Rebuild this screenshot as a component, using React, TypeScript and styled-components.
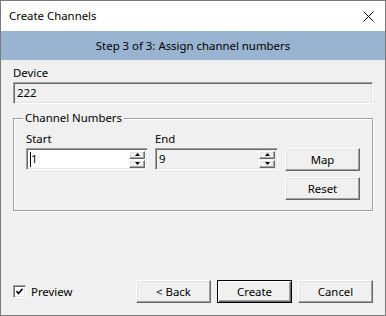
import React from "react";
import styled, { createGlobalStyle, css } from "styled-components";

const Global = createGlobalStyle`
  html, body { margin: 0; padding: 0; background: #ffffff; }
  body { font-family: "Noto Sans", "Open Sans", sans-serif; font-size: 11.4px; color: #000; }
  * { box-sizing: border-box; }
`;

const Window = styled.div`
  width: 386px;
  height: 316px;
  border: 1px solid #7a7a7a;
  background: #f0f0f0;
  display: flex;
  flex-direction: column;
`;

const TitleBar = styled.div`
  height: 30px;
  background: #ffffff;
  display: flex;
  align-items: center;
  justify-content: space-between;
  padding: 0 11px 0 8px;
`;

const TitleText = styled.span`
  line-height: 16px;
`;

const CloseIcon = () => (
  <svg width="11" height="11" viewBox="0 0 11 11">
    <path d="M0.5 0.5 L10.5 10.5 M10.5 0.5 L0.5 10.5" stroke="#000" strokeWidth="1" />
  </svg>
);

const StepBand = styled.div`
  height: 29px;
  background: #99b4d1;
  display: flex;
  align-items: center;
  justify-content: center;
  line-height: 16px;
`;

const Body = styled.div`
  flex: 1;
  display: flex;
  flex-direction: column;
  padding: 5px 12px 12px 12px;
`;

const Label = styled.div`
  line-height: 16px;
  height: 16px;
  margin-bottom: 1px;
`;

const sunken = css`
  border-top: 1px solid #a0a0a0;
  border-left: 1px solid #a0a0a0;
  border-right: 1px solid #ffffff;
  border-bottom: 1px solid #ffffff;
  box-shadow: inset 1px 1px 0 #696969, inset -1px -1px 0 #e3e3e3;
`;

const raised = css`
  border-top: 1px solid #ffffff;
  border-left: 1px solid #ffffff;
  border-right: 1px solid #696969;
  border-bottom: 1px solid #696969;
  box-shadow: inset -1px -1px 0 #a0a0a0, inset 1px 1px 0 #e3e3e3;
`;

const TextBox = styled.div<{ $white?: boolean; $w: number }>`
  ${sunken};
  width: ${(p) => p.$w}px;
  height: 22px;
  background: ${(p) => (p.$white ? "#ffffff" : "#f0f0f0")};
  display: flex;
  align-items: center;
  padding: 0 2px 0 3px;
  line-height: 16px;
`;

const Value = styled.span`
  flex: 1;
  display: flex;
  align-items: center;
`;

const Caret = styled.span`
  display: inline-block;
  width: 1px;
  height: 15px;
  background: #000;
`;

const Spin = styled.div`
  display: flex;
  flex-direction: column;
  gap: 1px;
  width: 16px;
`;

const SpinBtn = styled.div`
  ${raised};
  height: 8px;
  background: #f0f0f0;
  display: flex;
  align-items: center;
  justify-content: center;
`;

const Arrow = ({ up }: { up?: boolean }) => (
  <svg width="5" height="3" viewBox="0 0 5 3">
    <path d={up ? "M2.5 0 L5 3 L0 3 Z" : "M0 0 L5 0 L2.5 3 Z"} fill="#000" />
  </svg>
);

const Group = styled.div`
  position: relative;
  margin-top: 14px;
  height: 93px;
  border: 1px solid #a0a0a0;
  box-shadow: inset 1px 1px 0 #ffffff, 1px 1px 0 #ffffff;
  padding: 12px 11px 0 12px;
  display: flex;
  gap: 7px;
`;

const Caption = styled.span`
  position: absolute;
  top: -9px;
  left: 9px;
  padding: 0 2px;
  background: #f0f0f0;
  line-height: 16px;
`;

const Field = styled.div`
  display: flex;
  flex-direction: column;
`;

const ButtonCol = styled.div`
  display: flex;
  flex-direction: column;
  gap: 6px;
  padding-top: 17px;
`;

const Button = styled.div<{ $default?: boolean }>`
  width: 75px;
  height: 23px;
  background: #f0f0f0;
  display: flex;
  align-items: center;
  justify-content: center;
  line-height: 16px;
  ${(p) =>
    p.$default
      ? css`
          border: 1px solid #000;
          box-shadow: inset 1px 1px 0 #ffffff, inset -1px -1px 0 #696969, inset -2px -2px 0 #a0a0a0;
        `
      : raised};
`;

const Footer = styled.div`
  margin-top: auto;
  display: flex;
  align-items: center;
  gap: 6px;
`;

const CheckRow = styled.label`
  display: flex;
  align-items: center;
  gap: 5px;
  margin-right: auto;
  line-height: 16px;
`;

const CheckBox = styled.span`
  ${sunken};
  width: 13px;
  height: 13px;
  background: #ffffff;
  display: flex;
  align-items: center;
  justify-content: center;
`;

const Check = () => (
  <svg width="7" height="7" viewBox="0 0 7 7">
    <path d="M0.5 3 L2.5 5.5 L6.5 0.8" stroke="#000" strokeWidth="1.6" fill="none" />
  </svg>
);

export default function App() {
  return (
    <>
      <Global />
      <Window>
        <TitleBar>
          <TitleText>Create Channels</TitleText>
          <CloseIcon />
        </TitleBar>
        <StepBand>Step 3 of 3: Assign channel numbers</StepBand>
        <Body>
          <Label>Device</Label>
          <TextBox $w={360}>
            <Value>222</Value>
          </TextBox>
          <Group>
            <Caption>Channel Numbers</Caption>
            <Field>
              <Label>Start</Label>
              <TextBox $white $w={122}>
                <Value>
                  <Caret />1
                </Value>
                <Spin>
                  <SpinBtn><Arrow up /></SpinBtn>
                  <SpinBtn><Arrow /></SpinBtn>
                </Spin>
              </TextBox>
            </Field>
            <Field>
              <Label>End</Label>
              <TextBox $w={123}>
                <Value>9</Value>
                <Spin>
                  <SpinBtn><Arrow up /></SpinBtn>
                  <SpinBtn><Arrow /></SpinBtn>
                </Spin>
              </TextBox>
            </Field>
            <ButtonCol>
              <Button>Map</Button>
              <Button>Reset</Button>
            </ButtonCol>
          </Group>
          <Footer>
            <CheckRow>
              <CheckBox><Check /></CheckBox>
              Preview
            </CheckRow>
            <Button>&lt; Back</Button>
            <Button $default>Create</Button>
            <Button>Cancel</Button>
          </Footer>
        </Body>
      </Window>
    </>
  );
}
